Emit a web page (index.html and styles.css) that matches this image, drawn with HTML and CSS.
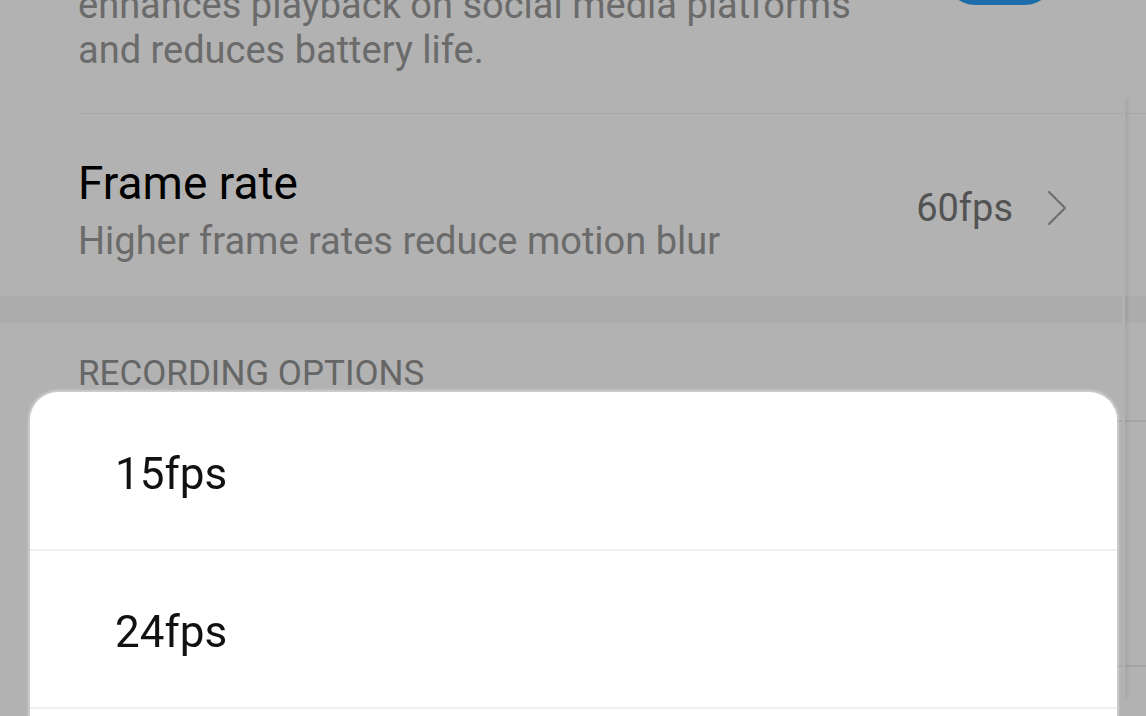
FILE: index.html
```html
<!DOCTYPE html>
<html lang="en">
<head>
<meta charset="utf-8">
<title>Frame rate</title>
<link rel="stylesheet" href="styles.css">
</head>
<body>
<div class="page">
  <div class="row-toggle">
    <p class="sub sub-top">enhances playback on social media platforms<br>and reduces battery life.</p>
    <span class="toggle"></span>
  </div>
  <div class="row-frame">
    <div class="texts">
      <div class="title">Frame rate</div>
      <div class="sub">Higher frame rates reduce motion blur</div>
    </div>
    <div class="value">
      <span>60fps</span>
      <svg class="chev" width="22" height="36" viewBox="0 0 22 36"><path d="M3 2 L19 18 L3 34" fill="none" stroke="#a0a0a0" stroke-width="2.2" stroke-linecap="round" stroke-linejoin="round"/></svg>
    </div>
  </div>
  <div class="band"></div>
  <div class="section">RECORDING OPTIONS</div>
  <div class="under-list">
    <div class="under-row"></div>
    <div class="under-row"></div>
  </div>
  <div class="scroll-thumb"></div>
</div>
<div class="dim"></div>
<div class="sheet">
  <div class="opt">15fps</div>
  <div class="opt">24fps</div>
  <div class="opt">30fps</div>
</div>
</body>
</html>
```
FILE: styles.css
```css
html, body {
  margin: 0;
  padding: 0;
  height: 716px;
  overflow: hidden;
  background: #ffffff;
  font-family: Roboto, "Noto Sans", "Liberation Sans", sans-serif;
}
.page {
  position: relative;
  height: 716px;
  background: #ffffff;
}
.row-toggle {
  display: flex;
  justify-content: space-between;
  align-items: flex-start;
  margin-top: -17px;
  margin-left: 78px;
  padding: 0 92px 40px 0;
  border-bottom: 1.5px solid #f0f0f0;
}
.sub {
  margin: 0;
  font-size: 38px;
  line-height: 45px;
  color: #9a9a9a;
}
.toggle {
  display: block;
  width: 108px;
  height: 58px;
  margin-top: -36px;
  border-radius: 29px;
  background: #2a9df4;
}
.row-frame {
  display: flex;
  align-items: center;
  justify-content: space-between;
  padding: 42px 78px 32px 78px;
}
.title {
  font-size: 46px;
  line-height: 54px;
  color: #000;
}
.row-frame .sub {
  margin-top: 9px;
}
.value {
  display: flex;
  align-items: center;
  gap: 33px;
  font-size: 38px;
  color: #777;
  margin-top: -4px;
}
.band {
  height: 27px;
  background: #f6f6f6;
}
.section {
  padding: 30px 78px 0;
  font-size: 35px;
  line-height: 42px;
  color: #929292;
}
.under-list {
  margin-top: 25px;
  margin-left: 78px;
}
.under-row {
  height: 243px;
  border-top: 2px solid #ededed;
}
.scroll-thumb {
  position: absolute;
  left: 1122px;
  top: 115px;
  bottom: 0;
  width: 3px;
  border-radius: 2px;
  background: #ffffff;
  box-shadow: 3px 0 3px rgba(0, 0, 0, 0.07);
}
.dim {
  position: fixed;
  inset: 0;
  background: rgba(0, 0, 0, 0.3);
}
.sheet {
  position: fixed;
  left: 30px;
  top: 392px;
  width: 1087px;
  bottom: -200px;
  background: #ffffff;
  border-radius: 28px 28px 0 0;
  box-shadow: 0 0 2px 2px rgba(255, 255, 255, 0.35);
}
.opt {
  display: flex;
  align-items: center;
  height: 158px;
  padding: 6px 0 0 85px;
  box-sizing: border-box;
  border-bottom: 2px solid #efefef;
  font-size: 44px;
  color: #111;
}
.opt:first-child {
  height: 159px;
}
```
